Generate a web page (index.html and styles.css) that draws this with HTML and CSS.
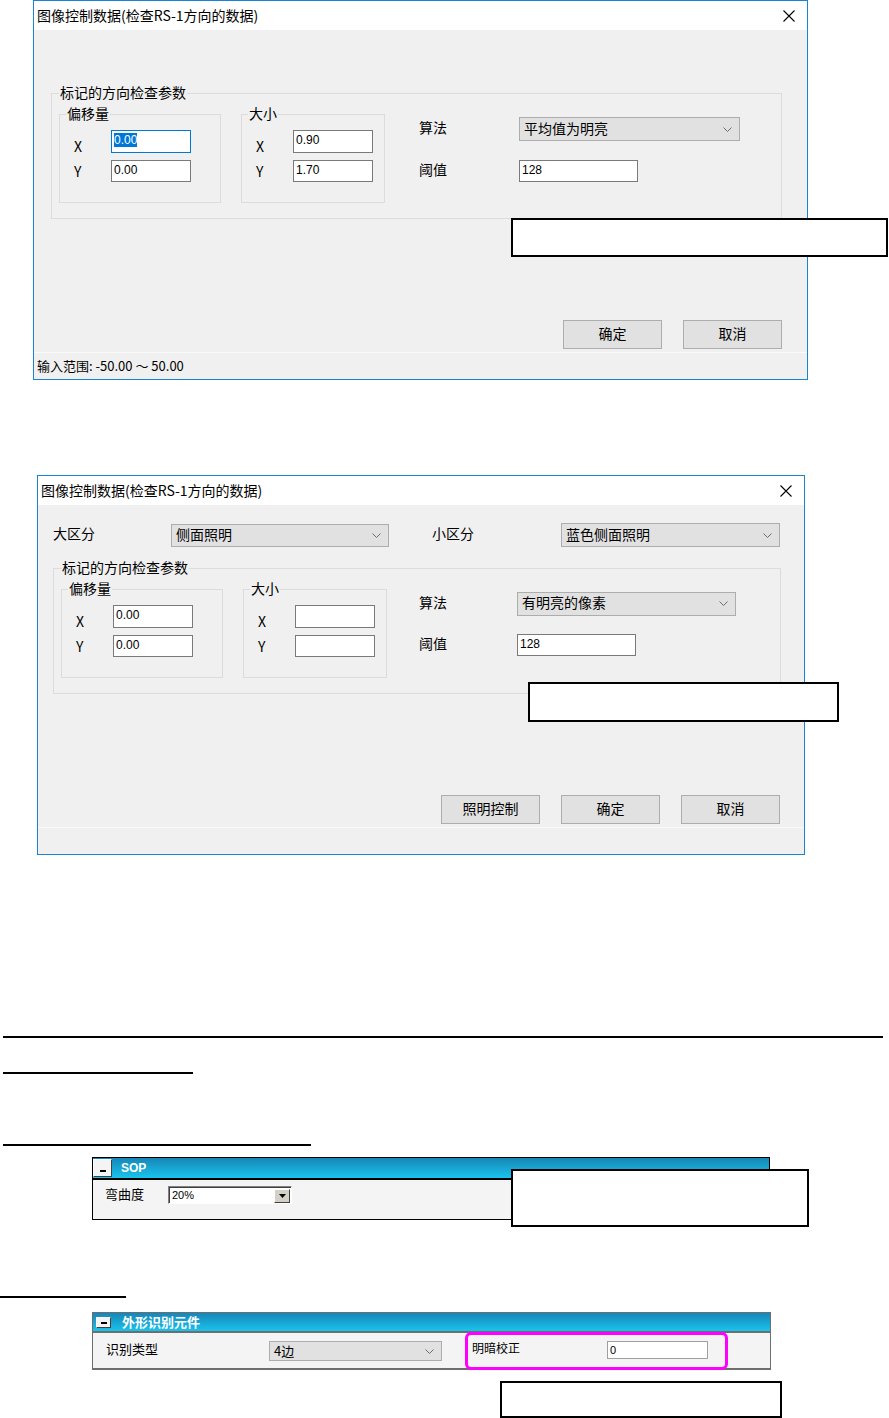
FILE: index.html
```html
<!DOCTYPE HTML>
<html>
<head>
	<meta charset="utf-8" />
	<title>图像控制数据</title>
	<link rel="stylesheet" href="styles.css">
</head>
<body>

<div id="page">

<div class="dialog dialog-one">
	<div class="titlebar">
		<span class="title">图像控制数据(检查RS-1方向的数据)</span>
		<svg class="close" width="12" height="12" viewBox="0 0 12 12"><path d="M0.5 0.5 L11.5 11.5 M11.5 0.5 L0.5 11.5" stroke="#000" stroke-width="1.1"/></svg>
	</div>
	<div class="dialog-body">
		<div class="group main-group">
			<span class="group-title">标记的方向检查参数</span>
			<div class="group-inner">
				<div class="group sub-group offset">
					<span class="group-title">偏移量</span>
					<div class="xy-grid">
						<span class="lbl-x">X</span><div class="input focus"><span class="sel">0.00</span></div>
						<span>Y</span><div class="input">0.00</div>
					</div>
				</div>
				<div class="group sub-group size">
					<span class="group-title">大小</span>
					<div class="xy-grid">
						<span class="lbl-x">X</span><div class="input">0.90</div>
						<span>Y</span><div class="input">1.70</div>
					</div>
				</div>
				<div class="algo-grid">
					<span>算法</span>
					<div class="combo"><span>平均值为明亮</span><svg width="9" height="5" viewBox="0 0 9 5"><path d="M0.5 0.5 L4.5 4.5 L8.5 0.5" fill="none" stroke="#6d6d6d"/></svg></div>
					<span>阈值</span>
					<div class="input wide">128</div>
				</div>
			</div>
		</div>
		<div class="buttons">
			<button>确定</button>
			<button>取消</button>
		</div>
	</div>
	<div class="statusbar">输入范围: -50.00 ～ 50.00</div>
</div>

<div class="dialog dialog-two">
	<div class="titlebar">
		<span class="title">图像控制数据(检查RS-1方向的数据)</span>
		<svg class="close" width="12" height="12" viewBox="0 0 12 12"><path d="M0.5 0.5 L11.5 11.5 M11.5 0.5 L0.5 11.5" stroke="#000" stroke-width="1.1"/></svg>
	</div>
	<div class="dialog-body">
		<div class="class-row">
			<span class="lbl-big">大区分</span>
			<div class="combo big"><span>侧面照明</span><svg width="9" height="5" viewBox="0 0 9 5"><path d="M0.5 0.5 L4.5 4.5 L8.5 0.5" fill="none" stroke="#6d6d6d"/></svg></div>
			<span class="lbl-small">小区分</span>
			<div class="combo small"><span>蓝色侧面照明</span><svg width="9" height="5" viewBox="0 0 9 5"><path d="M0.5 0.5 L4.5 4.5 L8.5 0.5" fill="none" stroke="#6d6d6d"/></svg></div>
		</div>
		<div class="group main-group">
			<span class="group-title">标记的方向检查参数</span>
			<div class="group-inner">
				<div class="group sub-group offset">
					<span class="group-title">偏移量</span>
					<div class="xy-grid">
						<span class="lbl-x">X</span><div class="input">0.00</div>
						<span>Y</span><div class="input">0.00</div>
					</div>
				</div>
				<div class="group sub-group size">
					<span class="group-title">大小</span>
					<div class="xy-grid">
						<span class="lbl-x">X</span><div class="input"></div>
						<span>Y</span><div class="input"></div>
					</div>
				</div>
				<div class="algo-grid">
					<span>算法</span>
					<div class="combo"><span>有明亮的像素</span><svg width="9" height="5" viewBox="0 0 9 5"><path d="M0.5 0.5 L4.5 4.5 L8.5 0.5" fill="none" stroke="#6d6d6d"/></svg></div>
					<span>阈值</span>
					<div class="input wide">128</div>
				</div>
			</div>
		</div>
		<div class="buttons">
			<button>照明控制</button>
			<button>确定</button>
			<button>取消</button>
		</div>
	</div>
	<div class="statusbar"></div>
</div>

<div class="rule rule-1"></div>
<div class="rule rule-2"></div>
<div class="rule rule-3"></div>

<div class="panel sop">
	<div class="panel-head">
		<span class="minus"></span>
		<span class="panel-title">SOP</span>
	</div>
	<div class="panel-body">
		<span class="panel-label">弯曲度</span>
		<div class="classic-select">
			<span>20%</span>
			<span class="drop-btn"><svg width="7" height="4" viewBox="0 0 7 4"><path d="M0 0 H7 L3.5 4 Z" fill="#000"/></svg></span>
		</div>
	</div>
</div>

<div class="rule rule-4"></div>

<div class="panel shape">
	<div class="panel-head">
		<span class="minus"></span>
		<span class="panel-title">外形识别元件</span>
	</div>
	<div class="panel-body">
		<span class="panel-label">识别类型</span>
		<div class="combo type"><span>4边</span><svg width="9" height="5" viewBox="0 0 9 5"><path d="M0.5 0.5 L4.5 4.5 L8.5 0.5" fill="none" stroke="#6d6d6d"/></svg></div>
		<div class="highlight">
			<span class="panel-label">明暗校正</span>
			<div class="input small-input">0</div>
		</div>
	</div>
</div>

<div class="note note-1"></div>
<div class="note note-2"></div>
<div class="note note-3"></div>
<div class="note note-4"></div>

</div>

</body>
</html>
```

FILE: styles.css
```css
body {
	margin: 0;
	background: #fff;
	color: #000;
	font-family: "Noto Sans CJK SC", "Liberation Sans", sans-serif;
	font-size: 14px;
}

#page {
	position: relative;
	height: 1418px;
	overflow: hidden;
}

/* dialogs */

.dialog {
	border: 1px solid #1883d7;
	background: #f0f0f0;
	box-sizing: border-box;
}

.dialog-one {
	margin-left: 33px;
	width: 775px;
}

.dialog-two {
	margin: 95px 0 0 37px;
	width: 768px;
}

.titlebar {
	height: 29px;
	background: #fff;
	display: flex;
	align-items: center;
	justify-content: space-between;
	padding: 0 12px 0 3px;
}

.title {
	line-height: 18px;
	margin-bottom: 2px;
}

.dialog-body {
	height: 322px;
	box-sizing: border-box;
	padding-top: 63px;
}

.dialog-two .dialog-body {
	padding-top: 18px;
}

.class-row {
	display: flex;
	align-items: center;
	padding-left: 15px;
}

.class-row > span {
	line-height: 18px;
	margin-bottom: 5px;
}

.lbl-big {
	width: 118px;
}

.lbl-small {
	width: 129px;
	margin-left: 43px;
}

.combo {
	display: flex;
	align-items: center;
	justify-content: space-between;
	box-sizing: border-box;
	height: 24px;
	border: 1px solid #adadad;
	background: #e1e1e1;
	padding: 0 7px 0 4px;
	line-height: 18px;
}

.combo span {
	margin-bottom: 3px;
}

.combo.big { width: 218px; height: 23px; }
.combo.small { width: 219px; height: 24px; }

/* group boxes */

.group {
	border: 1px solid #dcdcdc;
	box-sizing: border-box;
}

.group-title {
	display: table;
	margin: -11px 0 0 7px;
	padding: 0 1px;
	background: #f0f0f0;
	line-height: 18px;
}

.main-group {
	margin-left: 17px;
	width: 731px;
	height: 126px;
}

.dialog-two .main-group {
	margin: 21px 0 0 15px;
	width: 728px;
}

.group-inner {
	display: flex;
	align-items: flex-start;
	margin-top: 13px;
}

.sub-group {
	height: 89px;
	margin-left: 7px;
}

.sub-group .group-title {
	margin-left: 6px;
}

.offset { width: 162px; }

.size {
	width: 144px;
	margin-left: 20px;
}

.xy-grid {
	display: grid;
	grid-template-columns: 37px 80px;
	grid-template-rows: 23px 22px;
	row-gap: 7px;
	align-items: center;
	margin-top: 8px;
	padding-left: 14px;
}

.xy-grid span {
	line-height: 18px;
}

.xy-grid .lbl-x {
	padding-top: 8px;
}

.input {
	box-sizing: border-box;
	width: 80px;
	height: 100%;
	border: 1px solid #7a7a7a;
	background: #fff;
	padding-left: 2px;
	font: 12px/19px "Liberation Sans", sans-serif;
}

.input.focus {
	border-color: #0078d7;
}

.sel {
	background: #0078d7;
	color: #fff;
}

.algo-grid {
	display: grid;
	grid-template-columns: 100px 221px;
	grid-template-rows: 24px 22px;
	row-gap: 19px;
	align-items: center;
	margin: 3px 0 0 34px;
}

.dialog-two .algo-grid {
	margin-left: 32px;
	grid-template-columns: 98px 219px;
	grid-template-rows: 23px 22px;
	row-gap: 19px;
}

.algo-grid > span {
	line-height: 18px;
	margin-bottom: 4px;
}

.algo-grid .wide {
	width: 119px;
}

.buttons {
	display: flex;
	justify-content: flex-end;
	gap: 21px;
	margin-top: 101px;
	padding-right: 25px;
}

.dialog-two .buttons {
	padding-right: 24px;
}

button {
	width: 99px;
	height: 29px;
	padding: 0 0 3px;
	border: 1px solid #adadad;
	background: #e1e1e1;
	color: #000;
	font-family: "Noto Sans CJK SC", sans-serif;
	font-size: 14px;
}

.statusbar {
	height: 26px;
	border-top: 1px solid #fafafa;
	padding-left: 3px;
	font-size: 13px;
	line-height: 26px;
}

/* rules */

.rule {
	height: 2px;
	background: #000;
	margin-left: 3px;
}

.rule-1 { margin-top: 181px; width: 880px; }
.rule-2 { margin-top: 34px; width: 190px; }
.rule-3 { margin-top: 70px; width: 308px; }
.rule-4 { margin: 76px 0 0 0; width: 126px; }

/* property panels */

.panel {
	margin-left: 92px;
	box-sizing: border-box;
}

.panel-head {
	display: flex;
	align-items: center;
	background: linear-gradient(#1786b6, #19c3ee);
	color: #fff;
	font-weight: bold;
}

.minus {
	position: relative;
	box-sizing: border-box;
	background: #f4f4f4;
	border: 1px solid;
	border-color: #fff #404040 #404040 #fff;
}

.minus::after {
	content: "";
	position: absolute;
	left: 50%;
	bottom: 4px;
	width: 6px;
	height: 2px;
	margin-left: -3px;
	background: #000;
}

.panel-body {
	display: flex;
	align-items: flex-start;
	background: #f4f4f4;
}

.panel-label {
	line-height: 18px;
}

.sop {
	width: 678px;
	margin-top: 11px;
	border: 1px solid #000;
}

.sop .panel-head {
	height: 20px;
	border-bottom: 2px solid #000;
}

.sop .minus {
	width: 19px;
	height: 18px;
}

.sop .panel-title {
	margin-left: 9px;
	font: bold 12px "Liberation Sans", sans-serif;
}

.sop .panel-body {
	height: 39px;
	box-sizing: border-box;
	padding: 5px 0 0 12px;
}

.sop .panel-label {
	width: 63px;
	font-size: 13px;
}

.classic-select {
	display: flex;
	align-items: center;
	justify-content: space-between;
	box-sizing: border-box;
	width: 124px;
	height: 18px;
	margin-top: 1px;
	background: #fff;
	border: 1px solid;
	border-color: #808080 #fff #fff #808080;
	box-shadow: inset 1px 1px #404040;
	padding: 0 1px 0 3px;
	font: 11px "Liberation Sans", sans-serif;
}

.drop-btn {
	display: flex;
	align-items: center;
	justify-content: center;
	box-sizing: border-box;
	width: 16px;
	height: 14px;
	margin-top: 1px;
	background: #d4d0c8;
	border: 1px solid;
	border-color: #fff #404040 #404040 #fff;
}

.shape {
	width: 679px;
	margin-top: 14px;
	border: 1px solid #6e6e6e;
	border-bottom-width: 2px;
}

.shape .panel-head {
	height: 18px;
	border-bottom: 2px solid #6e6e6e;
}

.shape .minus {
	width: 15px;
	height: 11px;
	margin-left: 3px;
}

.shape .minus::after {
	bottom: 3px;
}

.shape .panel-title {
	margin-left: 11px;
	font-size: 13px;
	line-height: 18px;
}

.shape .panel-body {
	height: 35px;
	padding-left: 13px;
}

.shape .panel-label {
	width: 163px;
	margin-top: 7px;
	font-size: 13px;
}

.combo.type {
	width: 173px;
	height: 20px;
	margin-top: 8px;
	font-size: 13px;
}

.combo.type span {
	margin-bottom: 1px;
}

.highlight {
	display: flex;
	align-items: flex-start;
	box-sizing: border-box;
	width: 263px;
	height: 38px;
	margin: -1px 0 0 23px;
	border: 3px solid #ff00ff;
	border-radius: 6px;
	padding-left: 4px;
}

.highlight .panel-label {
	width: 135px;
	margin-top: 4px;
	font-size: 12px;
}

.small-input {
	width: 101px;
	height: 18px;
	margin-top: 6px;
	border-color: #a0a0a0;
	font-size: 11px;
	line-height: 16px;
}

/* annotation boxes lying over the screenshots */

.note {
	position: absolute;
	box-sizing: border-box;
	border: 2px solid #000;
	background: #fff;
}

.note-1 { left: 511px; top: 218px; width: 377px; height: 39px; }
.note-2 { left: 528px; top: 682px; width: 311px; height: 40px; }
.note-3 { left: 511px; top: 1169px; width: 298px; height: 58px; }
.note-4 { left: 500px; top: 1381px; width: 282px; height: 37px; }
```
